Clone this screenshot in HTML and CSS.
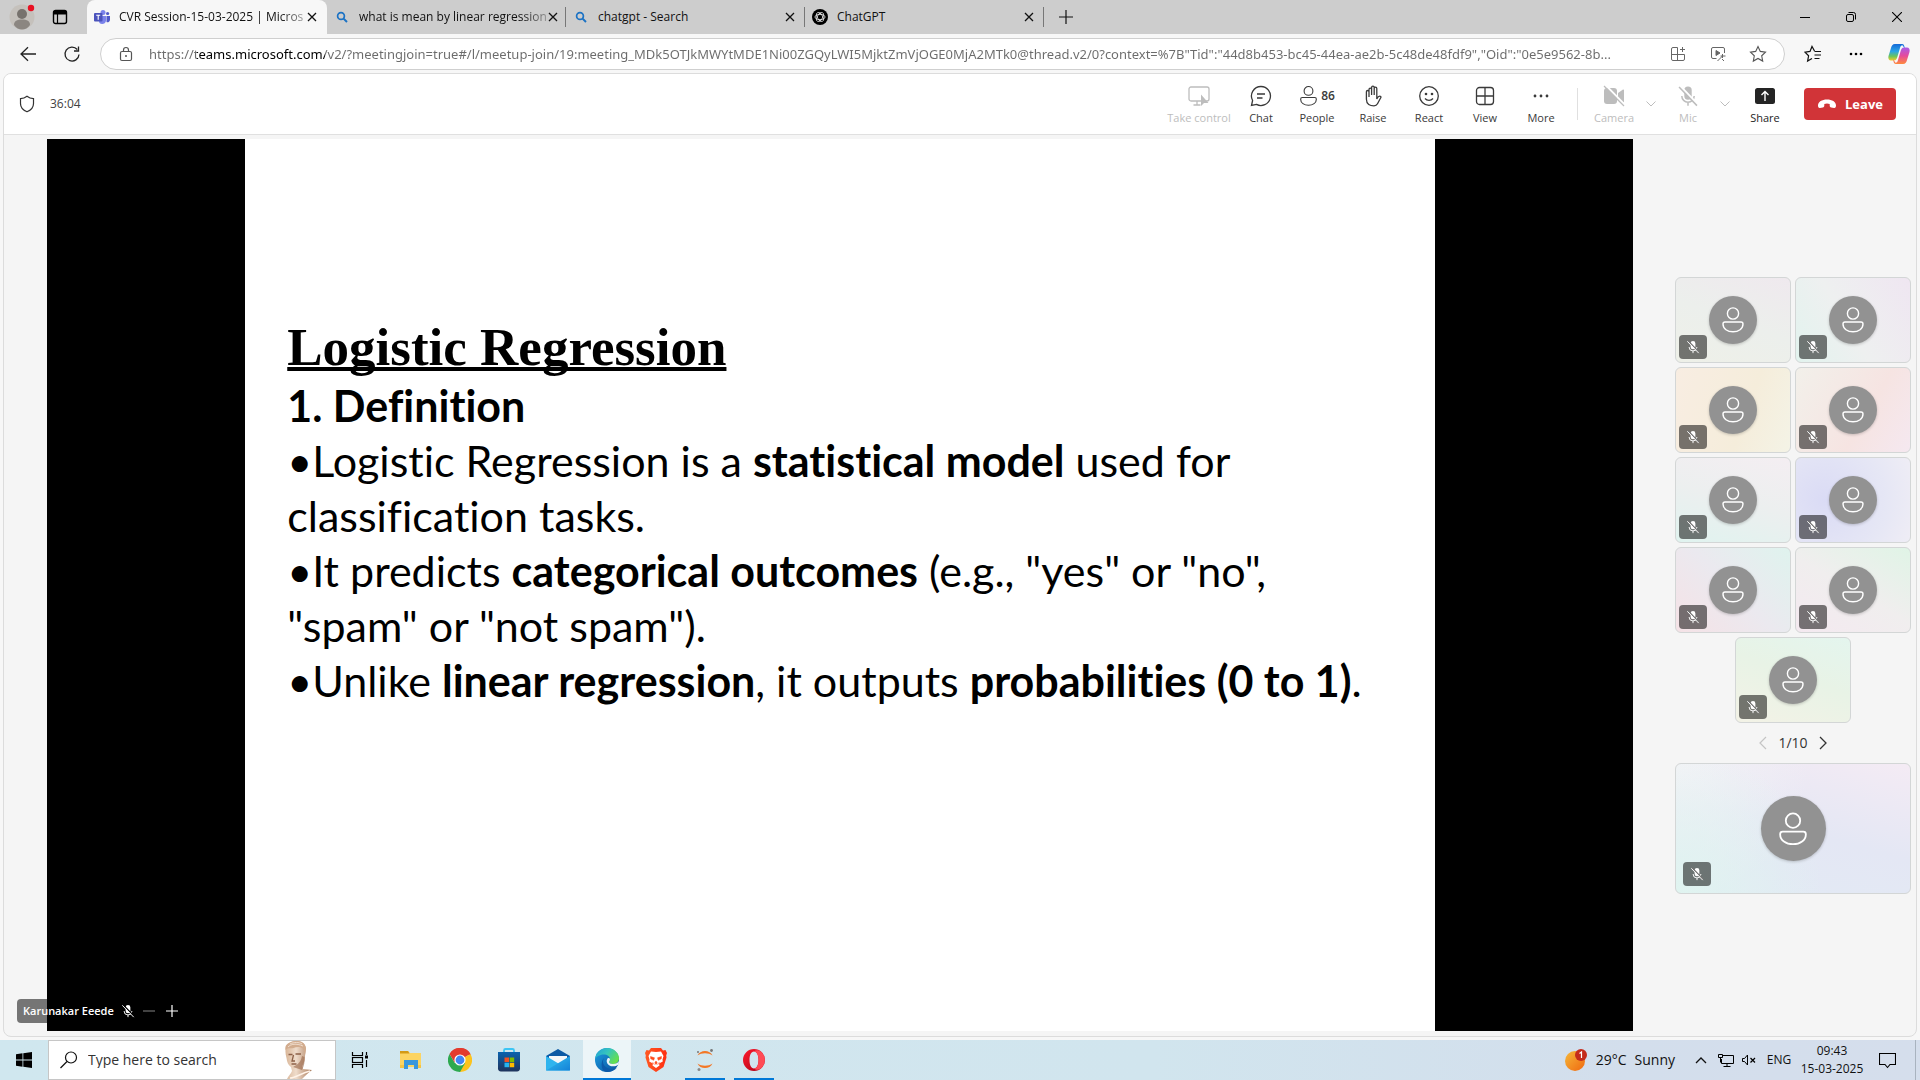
FILE: index.html
```html
<!DOCTYPE html>
<html lang="en">
<head>
<meta charset="utf-8">
<title>CVR Session-15-03-2025 | Microsoft Teams</title>
<link rel="stylesheet" href="styles.css">
</head>
<body>
<svg class="defs" width="0" height="0" aria-hidden="true">
  <defs>
    <symbol id="close" viewBox="0 0 12 12"><path d="M2 2l8 8M10 2l-8 8" fill="none" stroke="currentColor" stroke-width="1.3"/></symbol>
    <symbol id="search-blue" viewBox="0 0 12 12"><circle cx="5" cy="5" r="3.4" fill="none" stroke="#1b72c4" stroke-width="1.7"/><path d="M7.6 7.6l3.4 3.4" stroke="#1b72c4" stroke-width="2"/></symbol>
    <symbol id="person" viewBox="0 0 24 28"><circle cx="12" cy="7.5" r="5.6" fill="none" stroke="currentColor" stroke-width="1.4"/><path d="M4 16h16c1.1 0 2 .9 2 2 0 4.800-4.500 7.800-10 7.800S2 22.800 2 18c0-1.100.9-2 2-2z" fill="none" stroke="currentColor" stroke-width="1.4"/></symbol>
    <symbol id="mic-off" viewBox="0 0 16 16"><path d="M8 1a2.700 2.700 0 0 1 2.700 2.700V8A2.700 2.700 0 0 1 8 10.700 2.700 2.700 0 0 1 5.300 8V3.700A2.700 2.700 0 0 1 8 1z" fill="currentColor"/><path d="M3.500 8A4.500 4.500 0 0 0 8 12.500 4.500 4.500 0 0 0 12.500 8M8 12.500V15" fill="none" stroke="currentColor" stroke-width="1.1"/><path d="M2.500 1L15 14" stroke="var(--cut)" stroke-width="1.600"/><path d="M1.500 1.500L14.500 15" stroke="currentColor" stroke-width="1.100"/></symbol>
    <symbol id="chevron-down" viewBox="0 0 12 8"><path d="M1.500 1.500L6 6l4.500-4.500" fill="none" stroke="currentColor" stroke-width="1"/></symbol>
    <linearGradient id="g-store" x1="0" y1="0" x2="0" y2="1"><stop offset="0" stop-color="#0b62ae"/><stop offset="1" stop-color="#1f335c"/></linearGradient>
    <linearGradient id="g-edge-top" x1="0" y1="0" x2="1" y2=".6"><stop offset="0" stop-color="#1d9edb"/><stop offset=".5" stop-color="#36c5bd"/><stop offset="1" stop-color="#66e04e"/></linearGradient>
    <linearGradient id="g-edge-low" x1="0" y1="0" x2="1" y2="1"><stop offset="0" stop-color="#1ba0e2"/><stop offset="1" stop-color="#0b4f9e"/></linearGradient>
    <linearGradient id="g-mail" x1="0" y1="0" x2="1" y2="1"><stop offset="0" stop-color="#35c2f0"/><stop offset="1" stop-color="#1482d8"/></linearGradient>
    <linearGradient id="g-sun" x1="0" y1="0" x2="1" y2="1"><stop offset="0" stop-color="#f5b83a"/><stop offset="1" stop-color="#f0680f"/></linearGradient>
    <linearGradient id="g-opera" x1="0" y1="0" x2="1" y2="1"><stop offset="0" stop-color="#ff1b2d"/><stop offset="1" stop-color="#a70014"/></linearGradient>
    <linearGradient id="g-brave" x1="0" y1="0" x2="1" y2="0"><stop offset="0" stop-color="#ff5a22"/><stop offset="1" stop-color="#ff2e12"/></linearGradient>
    <linearGradient id="g-cop-a" x1="0" y1="0" x2="0" y2="1"><stop offset="0" stop-color="#1569d8"/><stop offset=".45" stop-color="#2aa5e6"/><stop offset=".75" stop-color="#6cc55b"/><stop offset="1" stop-color="#f3cb2b"/></linearGradient>
    <linearGradient id="g-cop-b" x1="0" y1="0" x2="0" y2="1"><stop offset="0" stop-color="#a85be8"/><stop offset=".5" stop-color="#e64a9c"/><stop offset="1" stop-color="#ff8a3c"/></linearGradient>
    <linearGradient id="g-bust" x1="0" y1="0" x2="1" y2="0"><stop offset="0" stop-color="#d9b698"/><stop offset=".4" stop-color="#efdccb"/><stop offset="1" stop-color="#a97a5a"/></linearGradient>
  </defs>
</svg>

<header class="tabstrip">
  <button class="profile" aria-label="Profile"><svg width="28" height="28" viewBox="0 0 28 28"><circle cx="14" cy="14" r="12.500" fill="#c5c1bc"/><circle cx="14" cy="11" r="5" fill="#77726d"/><path d="M6 22c0-4 3-5.500 8-5.500s8 1.500 8 5.500c-2 3-5 4.500-8 4.500S8 25 6 22z" fill="#8b8681"/><circle cx="23" cy="5" r="3.200" fill="#e81123"/></svg></button>
  <button class="workspaces" aria-label="Workspaces"><svg width="16" height="16" viewBox="0 0 16 16"><rect x="1.500" y="1.500" width="13" height="13" rx="2" fill="none" stroke="#000" stroke-width="1.400"/><path d="M2 2h12v3.500H2z"/><path d="M5.500 5v9" stroke="#000" stroke-width="1.200"/></svg></button>
  <div class="tab active">
    <svg width="16" height="16" viewBox="0 0 16 16"><circle cx="9" cy="3.500" r="2.500" fill="#7b83eb"/><circle cx="13.600" cy="4.500" r="1.600" fill="#5059c9"/><path d="M6 7h6v5a4 4 0 0 1-4 3c-1.500 0-2.500-1-3-2z" fill="#7b83eb"/><path d="M12.500 7H16v4a2.500 2.500 0 0 1-3.500 2z" fill="#5059c9"/><rect y="4" width="8.500" height="8.500" rx="1" fill="#4b53bc"/><path d="M2.200 6.200h4M4.200 6.200v4.500" stroke="#fff" stroke-width="1.100"/></svg>
    <span class="tab-title faded">CVR Session-15-03-2025 | Micros</span>
    <button class="tab-close" aria-label="Close tab"><svg width="12" height="12"><use href="#close"/></svg></button>
  </div>
  <div class="tab">
    <svg width="16" height="12"><use href="#search-blue"/></svg>
    <span class="tab-title faded">what is mean by linear regression</span>
    <button class="tab-close" aria-label="Close tab"><svg width="12" height="12"><use href="#close"/></svg></button>
  </div>
  <div class="tab">
    <svg width="16" height="12"><use href="#search-blue"/></svg>
    <span class="tab-title">chatgpt - Search</span>
    <button class="tab-close" aria-label="Close tab"><svg width="12" height="12"><use href="#close"/></svg></button>
  </div>
  <div class="tab">
    <svg width="16" height="16" viewBox="0 0 16 16"><circle cx="8" cy="8" r="8"/><g fill="none" stroke="#eee" stroke-width=".8"><ellipse cx="8" cy="8" rx="5" ry="2.600"/><ellipse cx="8" cy="8" rx="5" ry="2.600" transform="rotate(60 8 8)"/><ellipse cx="8" cy="8" rx="5" ry="2.600" transform="rotate(120 8 8)"/></g></svg>
    <span class="tab-title">ChatGPT</span>
    <button class="tab-close" aria-label="Close tab"><svg width="12" height="12"><use href="#close"/></svg></button>
  </div>
  <button class="new-tab" aria-label="New tab"><svg width="16" height="16" viewBox="0 0 16 16"><path d="M8 1v14M1 8h14" stroke="#111" stroke-width="1.200"/></svg></button>
  <div class="window-controls">
    <button aria-label="Minimize"><svg width="10" height="10" viewBox="0 0 10 10"><path d="M0 5.500h10" stroke="#000"/></svg></button>
    <button aria-label="Restore"><svg width="10" height="10" viewBox="0 0 10 10" fill="none" stroke="#000"><rect x=".5" y="2.500" width="7" height="7" rx="1.500"/><path d="M2.500 .5h5a2 2 0 0 1 2 2v5"/></svg></button>
    <button aria-label="Close"><svg width="10" height="10" viewBox="0 0 10 10"><path d="M0 0l10 10M10 0L0 10" stroke="#000" stroke-width="1.100"/></svg></button>
  </div>
</header>

<nav class="browserbar">
  <button class="nav-btn" aria-label="Back"><svg width="16" height="16" viewBox="0 0 16 16"><path d="M16 8H1M8 1.200L1 8l7 6.800" fill="none" stroke="#222" stroke-width="1.300"/></svg></button>
  <button class="nav-btn" aria-label="Refresh"><svg width="18" height="18" viewBox="0 0 18 18"><path d="M16 9.500A7 7 0 1 1 14.300 4.500M15.500 1.500v4.500H11" fill="none" stroke="#222" stroke-width="1.300"/></svg></button>
  <div class="omnibox">
    <svg width="14" height="16" viewBox="0 0 14 16"><path d="M4.500 5.500V4a2.500 2.500 0 0 1 5 0v1.500" fill="none" stroke="#555" stroke-width="1.200"/><rect x="1.500" y="5.500" width="11" height="9" rx="1.500" fill="none" stroke="#555" stroke-width="1.200"/><circle cx="7" cy="10" r="1" fill="#555"/></svg>
    <input class="url" type="text" aria-label="Address" value="https://teams.microsoft.com/v2/?meetingjoin=true#/l/meetup-join/19:meeting_MDk5OTJkMWYtMDE1Ni00ZGQyLWI5MjktZmVjOGE0MjA2MTk0@thread.v2/0?context=%7B&quot;Tid&quot;:&quot;44d8b453-bc45-44ea-ae2b-5c48de48fdf9&quot;,&quot;Oid&quot;:&quot;0e5e9562-8b...">
    <button aria-label="Install app"><svg width="16" height="16" viewBox="0 0 16 16" fill="none" stroke="#666"><path d="M7.500 1.500H3a1.500 1.500 0 0 0-1.500 1.500v10A1.500 1.500 0 0 0 3 14.500h10a1.500 1.500 0 0 0 1.500-1.500V8.500h-13M7.500 1.500v13M12.500 1v5M10 3.500h5"/></svg></button>
    <button aria-label="Enhance video"><svg width="16" height="16" viewBox="0 0 16 16" fill="none" stroke="#666"><path d="M6.500 12.500H3A1.500 1.500 0 0 1 1.500 11V3A1.500 1.500 0 0 1 3 1.500h10A1.500 1.500 0 0 1 14.500 3v4"/><path d="M6 4.500v5L10 7z" fill="#666"/><path d="M7.500 15l5-5M12.500 8v4M10.500 10h5M12 13l2 2"/></svg></button>
    <button aria-label="Add to favorites"><svg width="18" height="18" viewBox="0 0 18 18"><path d="M9 1.500l2.300 4.900 5.200.7-3.800 3.700 1 5.300L9 13.500l-4.700 2.600 1-5.300L1.500 7.100l5.200-.7z" fill="none" stroke="#555" stroke-width="1.100"/></svg></button>
  </div>
  <button class="side-btn" aria-label="Favorites"><svg width="18" height="18" viewBox="0 0 18 18" fill="none" stroke="#111" stroke-width="1.200"><path d="M10.500 6L8 1.500 6 6.400l-5 .7 3.600 3.700-1 5.300L8 13.600M10.500 6.500h6.500M10.500 10h6.500M10.500 13.500h5"/></svg></button>
  <button class="side-btn" aria-label="Settings and more"><svg width="14" height="4" viewBox="0 0 14 4"><circle cx="2" cy="2" r="1.300"/><circle cx="7" cy="2" r="1.300"/><circle cx="12" cy="2" r="1.300"/></svg></button>
  <button class="side-btn" aria-label="Copilot"><svg width="24" height="22" viewBox="0 0 24 22"><path d="M15 1H8C5.500 1 4.500 3 4 5L1.500 13c-.7 2.500.5 4.500 2.500 4.500h3c2 0 2.700-1.500 3.200-3L13 5c.5-1.800 1-2.800 2.500-2.800L18 6c-.5-3-1-5-3-5z" fill="url(#g-cop-a)"/><path d="M9 21h7c2.500 0 3.500-2 4-4l2.500-8c.7-2.500-.5-4.500-2.500-4.500h-3c-2 0-2.700 1.500-3.200 3L11 17c-.5 1.800-1 2.800-2.500 2.800L6 16c.5 3 1 5 3 5z" fill="url(#g-cop-b)"/></svg></button>
</nav>

<main class="meeting">
  <div class="callbar">
    <svg class="shield" width="16" height="18" viewBox="0 0 16 18"><path d="M8 1.200c2 1.600 4.200 2.300 6.500 2.400v4.900c0 4-2.500 6.700-6.500 8.300C4 15.200 1.500 12.500 1.500 8.500V3.600C3.800 3.500 6 2.800 8 1.200z" fill="none" stroke="#333" stroke-width="1.200"/></svg>
    <span class="timer">36:04</span>
    <div class="actions">
      <button class="action wide" disabled><svg width="22" height="22" viewBox="0 0 22 22"><rect x="1" y="2" width="20" height="14" rx="2" fill="none" stroke="currentColor" stroke-width="1.300"/><path d="M9 16v3.500M5.500 20h7" stroke="currentColor" stroke-width="1.300"/><path d="M13 9.500V21l3-3h4.500z" fill="currentColor"/></svg><span>Take control</span></button>
      <button class="action"><svg width="22" height="22" viewBox="0 0 22 22" fill="none" stroke="currentColor" stroke-width="1.300"><path d="M11 1.500a9.500 9.500 0 1 1-4.500 17.900L1.500 20.500l1.100-5A9.500 9.500 0 0 1 11 1.500z"/><path d="M7 9h8M7 13h5.500"/></svg><span>Chat</span></button>
      <button class="action"><span class="people"><svg width="19" height="22"><use href="#person"/></svg><b>86</b></span><span>People</span></button>
      <button class="action"><svg width="20" height="22" viewBox="0 0 20 22" fill="none" stroke="currentColor" stroke-width="1.300"><path d="M6 12V4.500a1.300 1.300 0 0 1 2.600 0V10M8.600 10V2.500a1.300 1.300 0 0 1 2.600 0V10M11.200 10V3.500a1.300 1.300 0 0 1 2.600 0V14c1-2 2-3.200 3.600-2.700.8.300.6 1 .3 1.500l-3.200 6c-.7 1.300-1.700 2-3.500 2-4 0-7.600-1.500-7.600-6.500V6.800a1.300 1.300 0 0 1 2.600 0"/></svg><span>Raise</span></button>
      <button class="action"><svg width="22" height="22" viewBox="0 0 22 22"><circle cx="11" cy="11" r="9.300" fill="none" stroke="currentColor" stroke-width="1.300"/><circle cx="8" cy="9" r="1.300" fill="currentColor"/><circle cx="14" cy="9" r="1.300" fill="currentColor"/><path d="M7 13.500c2 2.400 6 2.400 8 0" fill="none" stroke="currentColor" stroke-width="1.300"/></svg><span>React</span></button>
      <button class="action"><svg width="20" height="22" viewBox="0 0 20 22" fill="none" stroke="currentColor" stroke-width="1.300"><rect x="1.500" y="2.500" width="17" height="17" rx="3"/><path d="M10 2.500v17M1.500 11h17"/></svg><span>View</span></button>
      <button class="action"><svg width="18" height="22" viewBox="0 0 18 22" fill="currentColor"><circle cx="3" cy="11" r="1.400"/><circle cx="9" cy="11" r="1.400"/><circle cx="15" cy="11" r="1.400"/></svg><span>More</span></button>
      <span class="divider"></span>
      <button class="action device" disabled><svg width="22" height="22" viewBox="0 0 22 22"><rect x="1" y="3" width="13" height="16" rx="3" fill="currentColor"/><path d="M15 8l5-3.500c.5-.3 1 0 1 .5v12c0 .5-.5.800-1 .5L15 14z" fill="currentColor"/><path d="M2.500 0L22 20" stroke="#fff" stroke-width="2"/><path d="M1 1l20 20" stroke="currentColor" stroke-width="1.300"/></svg><span>Camera</span></button>
      <button class="more-arrow" aria-label="Camera options" disabled><svg width="12" height="8"><use href="#chevron-down"/></svg></button>
      <button class="action device" disabled><svg width="22" height="22"><use href="#mic-off"/></svg><span>Mic</span></button>
      <button class="more-arrow" aria-label="Mic options" disabled><svg width="12" height="8"><use href="#chevron-down"/></svg></button>
      <button class="action share"><svg width="22" height="22" viewBox="0 0 22 22"><rect x="1" y="3" width="20" height="16" rx="2.500" fill="#242424"/><path d="M11 16V6.500M7.500 10L11 6.500l3.500 3.500" fill="none" stroke="#fff" stroke-width="1.400"/></svg><span>Share</span></button>
      <button class="leave"><svg width="20" height="12" viewBox="0 0 20 12"><path d="M10 1.500c5 0 9 2.300 9 6 0 1.500-.6 2.700-1.900 2.500l-2.900-.6c-1.100-.3-1.500-1-1.500-2V6C11 5.300 9 5.300 7.300 6v1.400c0 1-.4 1.700-1.500 2l-2.900.6C1.600 10.200 1 9 1 7.500c0-3.700 4-6 9-6z" fill="#fff"/></svg>Leave</button>
    </div>
  </div>

  <div class="stage">
    <section class="screen">
      <article class="slide">
        <h1>Logistic Regression</h1>
        <h2>1. Definition</h2>
        <p>•Logistic Regression is a <strong>statistical model</strong> used for<br>classification tasks.</p>
        <p>•It predicts <strong>categorical outcomes</strong> (e.g., "yes" or "no",<br>"spam" or "not spam").</p>
        <p>•Unlike <strong>linear regression</strong>, it outputs <strong>probabilities (0 to 1)</strong>.</p>
      </article>
    </section>
    <aside class="roster">
      <div class="tiles">
        <div class="tile t1"><span class="avatar"><svg width="24" height="28"><use href="#person"/></svg></span><span class="muted"><svg width="14" height="14"><use href="#mic-off"/></svg></span></div>
        <div class="tile t2"><span class="avatar"><svg width="24" height="28"><use href="#person"/></svg></span><span class="muted"><svg width="14" height="14"><use href="#mic-off"/></svg></span></div>
        <div class="tile t3"><span class="avatar"><svg width="24" height="28"><use href="#person"/></svg></span><span class="muted"><svg width="14" height="14"><use href="#mic-off"/></svg></span></div>
        <div class="tile t4"><span class="avatar"><svg width="24" height="28"><use href="#person"/></svg></span><span class="muted"><svg width="14" height="14"><use href="#mic-off"/></svg></span></div>
        <div class="tile t5"><span class="avatar"><svg width="24" height="28"><use href="#person"/></svg></span><span class="muted"><svg width="14" height="14"><use href="#mic-off"/></svg></span></div>
        <div class="tile t6"><span class="avatar"><svg width="24" height="28"><use href="#person"/></svg></span><span class="muted"><svg width="14" height="14"><use href="#mic-off"/></svg></span></div>
        <div class="tile t7"><span class="avatar"><svg width="24" height="28"><use href="#person"/></svg></span><span class="muted"><svg width="14" height="14"><use href="#mic-off"/></svg></span></div>
        <div class="tile t8"><span class="avatar"><svg width="24" height="28"><use href="#person"/></svg></span><span class="muted"><svg width="14" height="14"><use href="#mic-off"/></svg></span></div>
        <div class="tile t9"><span class="avatar"><svg width="24" height="28"><use href="#person"/></svg></span><span class="muted"><svg width="14" height="14"><use href="#mic-off"/></svg></span></div>
      </div>
      <div class="pager">
        <button aria-label="Previous page" disabled><svg width="8" height="14" viewBox="0 0 8 14"><path d="M7 1L1 7l6 6" fill="none" stroke="currentColor" stroke-width="1.200"/></svg></button>
        <span>1/10</span>
        <button aria-label="Next page"><svg width="8" height="14" viewBox="0 0 8 14"><path d="M1 1l6 6-6 6" fill="none" stroke="currentColor" stroke-width="1.300"/></svg></button>
      </div>
      <div class="tile self"><span class="avatar"><svg width="32" height="36"><use href="#person"/></svg></span><span class="muted"><svg width="14" height="14"><use href="#mic-off"/></svg></span></div>
    </aside>
    <div class="presenter">
      <span>Karunakar Eeede</span>
      <svg width="14" height="14"><use href="#mic-off"/></svg>
      <button class="zoom-out" aria-label="Zoom out" disabled><svg width="12" height="12" viewBox="0 0 12 12"><path d="M0 6h12" stroke="currentColor" stroke-width="1.300"/></svg></button>
      <button aria-label="Zoom in"><svg width="12" height="12" viewBox="0 0 12 12"><path d="M0 6h12M6 0v12" stroke="currentColor" stroke-width="1.200"/></svg></button>
    </div>
  </div>
</main>

<footer class="taskbar">
  <button class="start" aria-label="Start"><svg width="16" height="16" viewBox="0 0 16 16"><path d="M0 2.200l6.500-.9v6.300H0zM7.300 1.200L16 0v7.600H7.300zM0 8.400h6.500v6.300L0 13.800zM7.300 8.400H16V16l-8.700-1.200z"/></svg></button>
  <label class="search">
    <svg width="18" height="18" viewBox="0 0 18 18"><circle cx="11" cy="6.500" r="5.500" fill="none" stroke="#111" stroke-width="1.200"/><path d="M7 10.500l-6.500 6.500" stroke="#111" stroke-width="1.300"/></svg>
    <input type="text" placeholder="Type here to search" aria-label="Type here to search">
    <svg width="30" height="38" viewBox="0 0 30 38"><path d="M4 38c1-3 4-5 5-8l-1-4c-3-2-4-5-4.500-9C1.500 10 2 3 8 1c6-2 13-1 14.500 5 .8 3-.5 6-.5 10s-1.500 7-3 9l1 3 9 1c-4 3-7 6-10 9z" fill="url(#g-bust)"/><path d="M2.500 9c3-3 5-1 8-2s6-2 10 1l1.500 6 1-6C23 0 14-1.500 8 1 3 3 2 5 2.500 9z" fill="#d2ac8e"/><path d="M5 6c3-3 8-4 15-1M7 3c4-2 9-2 12 0" fill="none" stroke="#f0ddcd" stroke-width="1"/><path d="M5.500 13.500h4M12.500 13h5.500M10.500 14l-1.500 6h3M8.500 23h5" fill="none" stroke="#8d6148" stroke-width="1.300"/><path d="M19 15c-1 5-3 8-9 11l9 3c2-4 3-8 2.500-13z" fill="#9d6c4e" opacity=".65"/><path d="M7 37c6 0 11-5 20-7" fill="none" stroke="#fff3e8" stroke-width="1.500"/></svg>
  </label>
  <div class="apps">
    <button class="task-view" aria-label="Task view"><svg width="18" height="18" viewBox="0 0 18 18" fill="none" stroke="#000" stroke-width="1.200"><path d="M1.500 1v3.500h10V1M1.500 17v-3.500h10V17"/><rect x="1.500" y="6.500" width="10" height="5"/><path d="M15.500 1v3M15.500 9v7"/><path d="M14 4.500h3v3h-3z" fill="#000" stroke="none"/></svg></button>
    <button aria-label="File Explorer"><svg width="24" height="24" viewBox="0 0 24 24"><path d="M1 3h8l2 2h11v14H1z" fill="#fcd462"/><path d="M1 3h8l1.500 2.500H1z" fill="#d39a16"/><path d="M5 12h14v9h-4v-4H9v4H5z" fill="#3a97dc"/><path d="M1 17h4v3H1zM19 17h3v3h-3z" fill="#f5c443"/></svg></button>
    <button aria-label="Google Chrome"><svg width="24" height="24" viewBox="0 0 24 24"><path d="M12 12L1.600 6A12 12 0 0 1 22.400 6z" fill="#e33b2e"/><path d="M12 12L22.400 6A12 12 0 0 1 12 24z" fill="#fcc31e"/><path d="M12 12v0L17.200 15 12 24A12 12 0 0 1 1.600 6l5.200 9z" fill="#2da94f"/><path d="M12 6.500h10.700A12 12 0 0 0 1.600 6l5 8.500z" fill="#e33b2e"/><circle cx="12" cy="12" r="5.600" fill="#fff"/><circle cx="12" cy="12" r="4.400" fill="#4285f4"/></svg></button>
    <button aria-label="Microsoft Store"><svg width="24" height="24" viewBox="0 0 24 24"><path d="M7 5V2.500A1.500 1.500 0 0 1 8.500 1h7A1.500 1.500 0 0 1 17 2.500V5" fill="none" stroke="#3cc5f4" stroke-width="1.800"/><path d="M1 4h22v16a3 3 0 0 1-3 3.500H4A3 3 0 0 1 1 20z" fill="url(#g-store)"/><path d="M7.500 9.500H12V14H7.500z" fill="#f25022"/><path d="M12.700 9.500h4.500V14h-4.500z" fill="#7fba00"/><path d="M7.500 14.700H12v4.500H7.500z" fill="#27b3ee"/><path d="M12.700 14.700h4.500v4.500h-4.500z" fill="#ffb900"/></svg></button>
    <button aria-label="Mail"><svg width="24" height="24" viewBox="0 0 24 24"><path d="M0 8l12-7 12 7v5H0z" fill="#0c59a4"/><path d="M3 8h18v6l-9 5-9-5z" fill="#f4f6f8"/><path d="M0 8l24 14.500H0z" fill="#2fb4ee"/><path d="M24 8v14.500H0z" fill="url(#g-mail)"/></svg></button>
    <button class="current" aria-label="Microsoft Edge"><svg width="24" height="24" viewBox="0 0 24 24"><circle cx="12" cy="12" r="12" fill="url(#g-edge-low)"/><path d="M0 11C1 4 6 0 12 0c7 0 12 5 12 10 0 4-3 6-6 6-2.500 0-4-1-4-2 0-.7 1-1 1-3 0-2.500-3-4.500-6-4.500C4 6.500 1 9 0 11z" fill="url(#g-edge-top)"/><path d="M9 10c-3 5 1 11 8 11 2 0 4-.6 5.500-2C20 22.500 16 24 12 24 6 24 5 14 9 10z" fill="#0d5aa9"/><path d="M12.500 10.500c-1.500 2-1 5 1.500 6.700 3 1.800 6.700 1.500 9.600-.7L24 13c-1 2-3.500 3-6 3-2.500 0-4-1-4-2 0-.7 1-1 1-3-.5-1-1.500-1.300-2.500-.5z" fill="#ecf5f8"/></svg></button>
    <button aria-label="Brave"><svg width="22" height="24" viewBox="0 0 22 24"><path d="M6 0h10l2 2.500 2.500-.5L22 5l-.8 2.500.3 2L18.500 19 11 24 3.500 19 .5 9.500l.3-2L0 5l1.500-3L4 2.500z" fill="url(#g-brave)"/><path d="M11 4l5-.5L18.500 8l-1 3.500 .3 2-3.800 2 .5 2L11 20l-3.500-2.500.5-2-3.800-2 .3-2L3.500 8 6 3.500z" fill="#fff"/><path d="M5.500 8.500l4 1.300-.8 2.500-3-1.500zM16.500 8.500l-4 1.300.8 2.500 3-1.500zM11 13l1.300 2L11 16.500 9.700 15zM7.500 14l2 3M14.500 14l-2 3" fill="#ff4a1a" stroke="#ff4a1a" stroke-width=".5"/></svg></button>
    <button class="running" aria-label="Jupyter"><svg width="18" height="24" viewBox="0 0 18 24"><path d="M1.500 7.500c2.500-6 12.500-6 15 0-4-3-11-3-15 0zM1.500 15.500c2.500 6 12.500 6 15 0-4 3-11 3-15 0z" fill="#f37726"/><circle cx="15.500" cy="2.500" r="1.400" fill="#777"/><circle cx="2" cy="4" r="1" fill="#777"/><circle cx="3" cy="21.500" r="1.500" fill="#888"/></svg></button>
    <button class="running" aria-label="Opera"><svg width="24" height="24" viewBox="0 0 24 24"><path d="M12 1a11 11 0 1 0 0 22 11 11 0 0 0 0-22zm0 2.500c3 0 4.500 4 4.500 8.500S15 20.500 12 20.500 7.500 16.500 7.500 12 9 3.500 12 3.500z" fill="url(#g-opera)" fill-rule="evenodd"/><path d="M12 3.500C14 1.500 17 2 19.500 4a11 11 0 0 1 0 16c-2.500 2-5.500 2.500-7.500.5 3 0 4.500-4 4.500-8.500S15 3.500 12 3.500z" fill="#ff4b55"/></svg></button>
  </div>
  <div class="tray">
    <button class="weather"><svg width="24" height="24" viewBox="0 0 24 24"><circle cx="11" cy="13" r="10" fill="url(#g-sun)"/><circle cx="17" cy="7" r="6" fill="#c42b1c"/><path d="M15.500 5.500L17.500 4v6" fill="none" stroke="#fff" stroke-width="1.200"/></svg><span>29°C</span><span>Sunny</span></button>
    <button class="tray-icon" aria-label="Show hidden icons"><svg width="12" height="8" viewBox="0 0 12 8"><path d="M1 7l5-5 5 5" fill="none" stroke="#111" stroke-width="1.300"/></svg></button>
    <button class="tray-icon" aria-label="Network"><svg width="17" height="14" viewBox="0 0 17 14" fill="none" stroke="#000"><path d="M5.500 2.500h11v8H4.500V6M10 10.500v3M6.500 13.500h7"/><path d="M1.500 1.500h4v3h-4zM3.500 4.500v5"/></svg></button>
    <button class="tray-icon" aria-label="Volume muted"><svg width="16" height="14" viewBox="0 0 16 14" fill="none" stroke="#000"><path d="M1.500 5.500h2l3-3.500v10l-3-3.500h-2z"/><path d="M9.500 5l4.500 4.500M14 5L9.500 9.500" stroke-width="1.200"/></svg></button>
    <button class="lang">ENG</button>
    <button class="clock"><span>09:43</span><span>15-03-2025</span></button>
    <button class="notify" aria-label="Notifications"><svg width="17" height="17" viewBox="0 0 17 17"><path d="M.5 1.500h16v11h-5.500L8.500 15.500 6 12.500H.5z" fill="none" stroke="#000" stroke-width="1.100"/></svg></button>
  </div>
</footer>
</body>
</html>
```
FILE: styles.css
```css
* { box-sizing: border-box; }

body {
  margin: 0;
  min-height: 100vh;
  display: flex;
  flex-direction: column;
  background: #f7f7f7;
  color: #242424;
  font: 12px/16px "Open Sans", "Noto Sans", sans-serif;
}

button, input { font: inherit; color: inherit; }

button {
  display: flex;
  align-items: center;
  justify-content: center;
  padding: 0;
  border: 0;
  background: none;
}

svg { flex: none; }
.defs { position: absolute; }

/* browser tabs */
.tabstrip { display: flex; height: 34px; background: #cdcdcd; color: #111; }
.profile { width: 44px; }
.workspaces { width: 32px; margin-right: 11px; }

.tab {
  width: 239px;
  display: flex;
  align-items: center;
  padding: 0 9px 0 7px;
  position: relative;
}
.tab + .tab:not(.active)::after {
  content: "";
  position: absolute;
  right: 0;
  top: 7px;
  height: 20px;
  border-right: 1px solid #777;
}
.tab.active {
  width: 240px;
  background: #f7f7f7;
  border-radius: 8px 8px 0 0;
}
.tab-title { flex: 1; margin-left: 9px; white-space: nowrap; }
.faded { mask-image: linear-gradient(to right, #000 86%, rgba(0, 0, 0, .3)); }
.new-tab { width: 44px; }
.window-controls { display: flex; margin-left: auto; }
.window-controls button { width: 46px; }

/* address bar */
.browserbar { display: flex; align-items: center; height: 39px; padding-left: 6px; }
.nav-btn { width: 44px; height: 32px; }
.omnibox {
  flex: 1;
  min-width: 0;
  display: flex;
  align-items: center;
  height: 32px;
  margin: 0 6px;
  padding: 0 14px 0 18px;
  border: 1px solid #cfcfcf;
  border-radius: 16px;
  background: #fff;
}
.omnibox button { width: 40px; height: 28px; }
.omnibox button:last-child { width: 24px; margin-left: 8px; }
.url {
  flex: 1;
  min-width: 0;
  height: 24px;
  margin-left: 16px;
  padding: 0;
  border: 0;
  outline: 0;
  font-family: "Noto Sans", "Open Sans", sans-serif;
  font-size: 13px;
  color: transparent;
  background: linear-gradient(to right, #6b6b6b 48px, #000 48px, #000 176px, #6b6b6b 176px);
  background-clip: text;
}
.side-btn { width: 43px; height: 32px; }

/* meeting window */
.meeting {
  flex: 1;
  display: flex;
  flex-direction: column;
  margin: 0 3px 3px;
  border: 1px solid #dcdcdc;
  border-radius: 8px;
  background: #f5f5f5;
  overflow: hidden;
}
.callbar {
  display: flex;
  align-items: center;
  height: 61px;
  padding: 0 20px 0 15px;
  border-bottom: 1px solid #e0e0e0;
  background: #fff;
}
.timer { margin-left: 15px; color: #424242; }
.actions { display: flex; align-items: center; margin-left: auto; }
.action {
  width: 56px;
  flex-direction: column;
  gap: 4px;
  padding-top: 2px;
  font-size: 11px;
  line-height: 14px;
  color: #3a3a3a;
  --cut: #fff;
}
.action.wide { width: 68px; }
.action.device { width: 50px; }
.action.share { width: 56px; color: #242424; }
.action:disabled, .more-arrow:disabled { color: #bdbdbd; }
.people { display: flex; align-items: center; gap: 3px; }
.people b { font-size: 12px; font-weight: 600; }
.divider { height: 32px; margin: 0 11px 0 8px; border-left: 1px solid #e0e0e0; }
.more-arrow { width: 24px; height: 32px; }
.leave {
  width: 92px;
  height: 32px;
  gap: 8px;
  margin-left: 11px;
  border-radius: 4px;
  background: #d13438;
  color: #fff;
  font-size: 13px;
  font-weight: 700;
}

/* shared screen and participants */
.stage { flex: 1; display: flex; padding: 4px 0 5px; position: relative; }
.screen {
  flex: 1;
  display: flex;
  justify-content: center;
  margin-left: 43px;
  background: #000;
}
.slide {
  width: 75%;
  padding: 177px 42px 0;
  background: #fff;
  color: #000;
  font: 43px/55px Lato, "Open Sans", sans-serif;
  font-variant-ligatures: none;
  white-space: nowrap;
}
.slide h1, .slide h2, .slide p { margin: 0; }
.slide h1 {
  font: bold 53px/62px "Liberation Serif", serif;
  text-decoration: underline;
  text-decoration-thickness: 4px;
  text-decoration-skip-ink: none;
}
.slide h2 { font-size: inherit; font-weight: 700; }

.roster { width: 283px; padding: 138px 5px 0 42px; }
.tiles { display: flex; flex-wrap: wrap; justify-content: center; gap: 4px; }
.tile {
  display: flex;
  align-items: center;
  justify-content: center;
  width: 116px;
  height: 86px;
  border: 1px solid #d3d6d6;
  border-radius: 6px;
  position: relative;
}
.tile.self { width: 100%; height: 131px; }
.avatar {
  display: flex;
  align-items: center;
  justify-content: center;
  width: 48px;
  height: 48px;
  border-radius: 50%;
  background: #929292;
  color: #fff;
  box-shadow: 0 1px 3px rgba(0, 0, 0, .2);
}
.self .avatar { width: 65px; height: 65px; }
.muted {
  position: absolute;
  left: 3px;
  bottom: 3px;
  display: flex;
  align-items: center;
  justify-content: center;
  width: 28px;
  height: 24px;
  border-radius: 4px;
  background: rgba(0, 0, 0, .52);
  color: #fff;
  --cut: #777;
}
.self .muted { left: 7px; bottom: 7px; }

.t1 { background: linear-gradient(200deg, #efe9ee, #ecefec 50%, #eef0e8); }
.t2 { background: linear-gradient(60deg, #e2f3ee, #eef0f0 45%, #efe6f1); }
.t3 { background: linear-gradient(110deg, #f8ede2, #f5eddb 60%, #f4f3e6); }
.t4 { background: linear-gradient(120deg, #f2f0ea, #f6e4e2 60%, #f5e8f0); }
.t5 { background: linear-gradient(15deg, #e0f3ef, #ecefef 50%, #f4eef2); }
.t6 { background: radial-gradient(circle at 25% 50%, #dadbf5, #e6e7f5 65%, #efedf5); }
.t7 { background: linear-gradient(45deg, #f5e2e6, #ebe9ef 50%, #dff3ee); }
.t8 { background: linear-gradient(30deg, #f4e9f0, #f0eeee 50%, #e0f4e6); }
.t9 { background: linear-gradient(200deg, #e4f5ee, #e8f3e6 45%, #f3f2e6); }
.self {
  background:
    radial-gradient(circle at 0 100%, #e0f4f0, transparent 55%),
    radial-gradient(circle at 0 0, #f3f3f6, transparent 50%),
    linear-gradient(15deg, #e2eaf4, #e4e7f4 50%, #f4ebf4);
}

.pager {
  display: flex;
  align-items: center;
  justify-content: center;
  height: 40px;
  gap: 11px;
  font-size: 14px;
  color: #333;
}
.pager button:disabled { color: #c4c4c4; }

.presenter {
  position: absolute;
  left: 13px;
  bottom: 13px;
  display: flex;
  align-items: center;
  height: 24px;
  gap: 8px;
  padding: 0 6px;
  border-radius: 4px;
  background: rgba(0, 0, 0, .52);
  color: #fff;
  font-size: 11px;
  font-weight: 600;
  --cut: #000;
}
.presenter span { width: 90px; white-space: nowrap; }
.presenter .zoom-out { color: #666; margin-right: 3px; }

/* taskbar */
.taskbar {
  display: flex;
  height: 40px;
  background: linear-gradient(to right, #d0e7ef, #d1e5ee 60%, #d3deec 85%, #d5deec);
  color: #111;
}
.start { width: 48px; }
.search {
  width: 288px;
  display: flex;
  align-items: center;
  padding: 0 22px 0 11px;
  border: 1px solid #c6c6c6;
  background: #fff;
}
.search input {
  flex: 1;
  min-width: 0;
  padding: 0;
  margin-left: 10px;
  border: 0;
  outline: 0;
  background: none;
  font-size: 14px;
}
.search input::placeholder { color: #333; opacity: 1; }
.apps { display: flex; gap: 1px; }
.apps button { width: 48px; position: relative; }
.apps .task-view { margin-right: 2px; }
.apps .current { background: #ecf5f8; box-shadow: inset 0 -2px #0078d7; }
.apps .running::after {
  content: "";
  position: absolute;
  left: 4px;
  right: 4px;
  bottom: 0;
  height: 2px;
  background: #0078d7;
}
.tray { display: flex; margin-left: auto; margin-right: 4px; border-right: 1px solid #a9b3bf; }
.weather { gap: 8px; margin-right: 14px; font-size: 14px; }
.tray-icon { width: 24px; }
.lang { width: 36px; }
.clock { width: 66px; flex-direction: column; gap: 2px; margin-left: 2px; }
.notify { width: 44px; margin-right: 6px; }
```
